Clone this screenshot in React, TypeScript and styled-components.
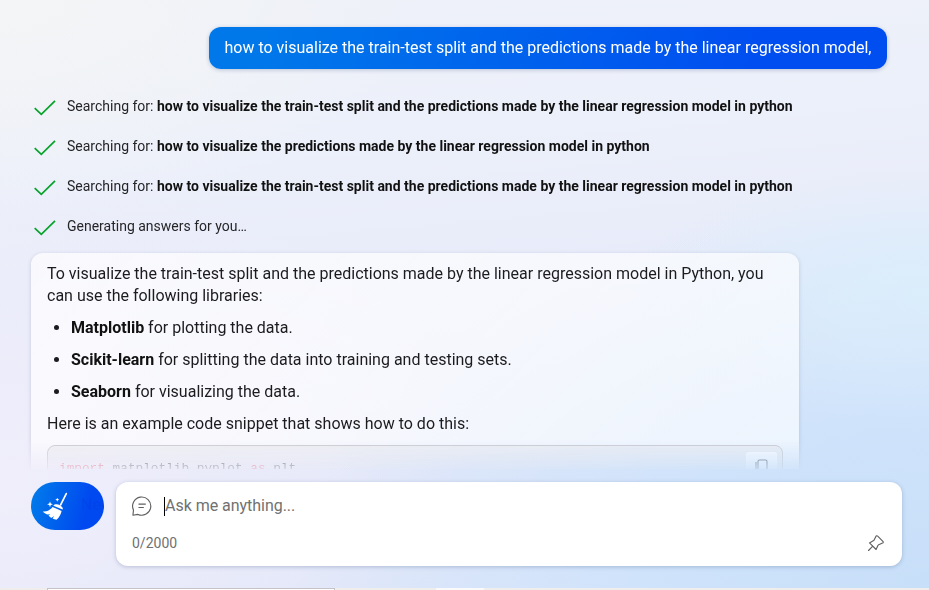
import React from "react";
import styled, { createGlobalStyle } from "styled-components";

const GlobalStyle = createGlobalStyle`
  *, *::before, *::after { box-sizing: border-box; }
  body { margin: 0; overflow: hidden; font-family: Roboto, "Liberation Sans", sans-serif; color: #111; }
`;

const Page = styled.div`
  width: 929px;
  height: 590px;
  display: flex;
  flex-direction: column;
  overflow: hidden;
  background:
    radial-gradient(ellipse 420px 220px at 0 0, #f4f5f6 0%, rgba(243, 244, 247, 0) 100%),
    radial-gradient(ellipse 300px 130px at 929px 295px, rgba(218, 240, 252, 0.75) 0%, rgba(218, 240, 252, 0) 100%),
    radial-gradient(ellipse 640px 390px at 929px 590px, #c8dff9 0%, #cfe3fb 45%, rgba(207, 227, 251, 0) 100%),
    radial-gradient(ellipse 480px 320px at 0 480px, #f0eefb 0%, rgba(239, 236, 251, 0) 100%),
    linear-gradient(175deg, #eef1f8 0%, #ecf0fa 25%, #e6e9f9 58%, #dfe6f8 100%);
`;

const Conversation = styled.main`
  height: 469px;
  flex: none;
  overflow: hidden;
  padding: 27px 42px 0 31px;
  display: flex;
  flex-direction: column;
  mask-image: linear-gradient(to bottom, #000 440px, transparent 474px);
`;

const UserMessage = styled.div`
  align-self: flex-end;
  flex: none;
  width: 678px;
  height: 42px;
  padding-left: 15.5px;
  border-radius: 12px;
  line-height: 41px;
  font-size: 16px;
  color: #fff;
  white-space: nowrap;
  background: linear-gradient(105deg, #0078ea 8%, #004df0 82%);
  box-shadow: 0 1px 4px rgba(0, 30, 90, 0.22);
`;

const Steps = styled.div`
  flex: none;
  display: flex;
  flex-direction: column;
  gap: 20px;
  margin-top: 27px;
`;

const Step = styled.div`
  height: 20px;
  display: flex;
  align-items: center;
  gap: 11px;
  padding-left: 3px;
  font-size: 14px;
  line-height: 20px;
  white-space: nowrap;
  color: #252528;

  svg { flex: none; margin-top: 3px; }
  b { color: #111; font-weight: 700; }
`;

const Answer = styled.article`
  flex: none;
  width: 768px;
  height: 300px;
  margin-top: 17px;
  padding: 10px 16px;
  border-radius: 12px;
  background: linear-gradient(135deg, rgba(255, 255, 255, 0.68), rgba(255, 255, 255, 0.62));
  box-shadow: 0 1px 4px rgba(40, 50, 90, 0.18);
  font-size: 16px;
  line-height: 22px;
  color: #1c1c1f;
`;

const Paragraph = styled.p`
  margin: 0 0 10px;
`;

const Libraries = styled.ul`
  margin: 0 0 10px;
  padding-left: 24px;
  display: flex;
  flex-direction: column;
  gap: 10px;

  b { font-weight: 700; color: #111; }
`;

const CodeBlock = styled.div`
  height: 100px;
  display: flex;
  justify-content: space-between;
  align-items: flex-start;
  padding: 6px 5px 0 11px;
  border: 1px solid #c9c9ce;
  border-radius: 8px;
  background: rgba(229, 229, 234, 0.55);
`;

const Code = styled.code`
  margin-top: 6px;
  font-family: "Liberation Mono", monospace;
  font-size: 12.75px;
  line-height: 22px;
  color: #333;
  white-space: pre;
`;

const Keyword = styled.span`
  color: #e2334d;
`;

const CopyButton = styled.button`
  width: 31px;
  height: 30px;
  padding: 0;
  border: 1px solid rgba(255, 255, 255, 0.7);
  border-radius: 3px;
  background: #fafcff;
  display: grid;
  place-items: start center;
`;

const Footer = styled.footer`
  height: 97px;
  flex: none;
  margin-top: 13px;
  padding: 0 27px 0 31px;
  display: flex;
  align-items: flex-start;
  gap: 12px;
`;

const NewTopic = styled.button`
  width: 73px;
  height: 48px;
  flex: none;
  border: 0;
  border-radius: 24px;
  padding: 0 0 0 9px;
  display: flex;
  align-items: center;
  gap: 9px;
  overflow: hidden;
  font: 16px Roboto, sans-serif;
  white-space: nowrap;
  color: rgba(0, 50, 215, 0.22);
  background: linear-gradient(105deg, #0078ea 8%, #0048f0 75%);

  svg { flex: none; }
`;

const TopicLabel = styled.span`
  margin-top: -3px;
`;

const Composer = styled.div`
  width: 786px;
  height: 84px;
  flex: none;
  padding: 12px 18px 0 16px;
  border-radius: 12px;
  background: #fff;
  box-shadow: 0 1px 4px rgba(40, 60, 110, 0.26);
`;

const InputRow = styled.div`
  height: 24px;
  display: flex;
  align-items: center;
`;

const Caret = styled.span`
  width: 1px;
  height: 19px;
  margin: 1px 0 0 12px;
  background: #000;
`;

const Placeholder = styled.span`
  font-size: 16px;
  line-height: 24px;
  letter-spacing: -0.03px;
  color: #707070;
`;

const ComposerMeta = styled.div`
  height: 24px;
  margin-top: 13px;
  display: flex;
  align-items: center;
  justify-content: space-between;
  font-size: 14px;
  color: #707070;
`;

const BottomStrip = styled.div`
  height: 2px;
  margin-top: 9px;
  display: flex;
  background: #efeeed;
`;

const StripField = styled.div`
  width: 288px;
  margin-left: 47px;
  border: solid #c5c3c5;
  border-width: 1px 1px 0;
  background: #fff;
`;

const StripTab = styled.div`
  width: 48px;
  margin-left: 101px;
  background: #fafafa;
`;

const CheckIcon = () => (
  <svg width="22" height="16" viewBox="0 0 22 16" fill="none" stroke="#07a22b" strokeWidth="1.7">
    <path d="M.7 8.1 7.3 14.4 21 .8" />
  </svg>
);

const BroomIcon = () => (
  <svg width="32" height="32" viewBox="0 0 32 32" fill="#fff">
    <path d="M26.3 3.6 20.6 14.8" stroke="#fff" strokeWidth="1.7" strokeLinecap="round" />
    <path d="M14.6 14.6c2.4-1.3 6.7.6 8 3.1.3.7.3 1.3 0 1.9l-9.2-3.9c.2-.5.6-.8 1.2-1.1Z" />
    <path d="m12.6 16.9 9 4c-.7 3.4-2.4 6.5-5.1 8.9-1.4-.1-2.7-.5-3.9-1.2l1.6-2.5-2.9 1.8c-1.1-.7-2-1.5-2.8-2.5l1.9-1.2-3 .3c-1.8-.6-3.4-1.6-4.6-3 3.6.4 7-.9 9.8-4.6Z" />
    <path d="m10 11.4.8 2.1 2.1.8-2.1.8-.8 2.1-.8-2.1-2.1-.8 2.1-.8ZM17.3 7.7l.6 1.4 1.4.6-1.4.6-.6 1.4-.6-1.4-1.4-.6 1.4-.6Z" />
  </svg>
);

const ChatIcon = () => (
  <svg width="20" height="20" viewBox="0 0 20 20" fill="none" stroke="#606060" strokeWidth="1.15" strokeLinecap="round" strokeLinejoin="round">
    <path d="M1.5 14.1A9.1 9.1 0 1 1 5.9 18.4L.9 19.2Z" />
    <path d="M6.9 8.1h6.5M6.9 11.5h4.5" />
  </svg>
);

const PinIcon = () => (
  <svg width="16" height="16" viewBox="0 0 16 16" fill="none" stroke="#606060" strokeWidth="1.15" strokeLinecap="round" strokeLinejoin="round">
    <path d="m.5 15.5 4.3-4.3M1.5 7.9l6.6 6.6 1.8-3.9c.2-.4.4-.6.8-.8l3.8-1.7c.8-.4 1-1.2.4-1.8L9.7 1.1C9.1.5 8.3.7 7.9 1.4L6.1 5c-.2.4-.5.7-.9.8Z" />
  </svg>
);

const CopyIcon = () => (
  <svg width="14" height="18" viewBox="0 0 14 18" fill="none" stroke="#444c57" strokeWidth="1.1">
    <rect x="3" y="1" width="9" height="13" rx="1.5" />
    <path d="M1 3v11.5a2 2 0 0 0 2 2h7" />
  </svg>
);

const CopyIconSlot = styled.span`
  display: block;
  padding-top: 6px;
  line-height: 0;
`;

const searches = [
  "how to visualize the train-test split and the predictions made by the linear regression model in python",
  "how to visualize the predictions made by the linear regression model in python",
  "how to visualize the train-test split and the predictions made by the linear regression model in python",
];

const libraries = [
  { name: "Matplotlib", use: "for plotting the data." },
  { name: "Scikit-learn", use: "for splitting the data into training and testing sets." },
  { name: "Seaborn", use: "for visualizing the data." },
];

export default function App() {
  return (
    <Page>
      <GlobalStyle />
      <Conversation>
        <UserMessage>
          how to visualize the train-test split and the predictions made by the linear regression model,
        </UserMessage>
        <Steps>
          {searches.map((query, i) => (
            <Step key={i}>
              <CheckIcon />
              <span>Searching for: <b>{query}</b></span>
            </Step>
          ))}
          <Step>
            <CheckIcon />
            <span>Generating answers for you…</span>
          </Step>
        </Steps>
        <Answer>
          <Paragraph>
            To visualize the train-test split and the predictions made by the linear regression model in Python, you
            can use the following libraries:
          </Paragraph>
          <Libraries>
            {libraries.map(({ name, use }) => (
              <li key={name}><b>{name}</b> {use}</li>
            ))}
          </Libraries>
          <Paragraph>Here is an example code snippet that shows how to do this:</Paragraph>
          <CodeBlock>
            <Code><Keyword>import</Keyword> matplotlib.pyplot <Keyword>as</Keyword> plt</Code>
            <CopyButton aria-label="Copy">
              <CopyIconSlot><CopyIcon /></CopyIconSlot>
            </CopyButton>
          </CodeBlock>
        </Answer>
      </Conversation>
      <Footer>
        <NewTopic><BroomIcon /><TopicLabel>New topic</TopicLabel></NewTopic>
        <Composer>
          <InputRow>
            <ChatIcon />
            <Caret />
            <Placeholder>Ask me anything...</Placeholder>
          </InputRow>
          <ComposerMeta>
            <span>0/2000</span>
            <PinIcon />
          </ComposerMeta>
        </Composer>
      </Footer>
      <BottomStrip>
        <StripField />
        <StripTab />
      </BottomStrip>
    </Page>
  );
}
